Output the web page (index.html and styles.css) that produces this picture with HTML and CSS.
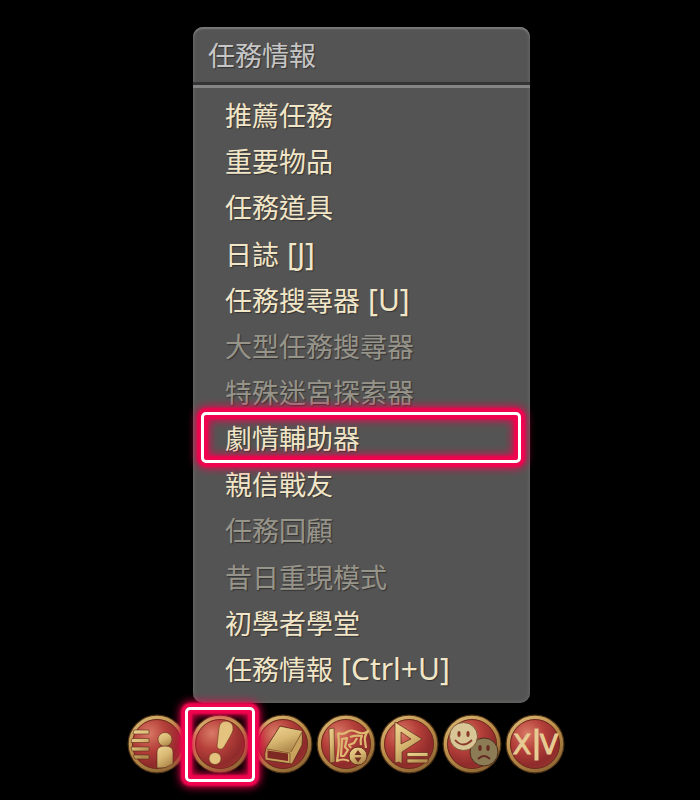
FILE: index.html
```html
<!DOCTYPE html>
<html lang="zh-Hant">
<head>
  <meta charset="UTF-8">
  <title>任務情報</title>
  <meta name="viewport" content="width=device-width, initial-scale=1.0">
  <link rel="stylesheet" href="styles.css">
</head>
<body>
  <!-- shared gradients for the round icons -->
  <svg class="defs" aria-hidden="true">
    <defs>
      <radialGradient id="red" cx="0.35" cy="0.3" r="0.8">
        <stop offset="0" stop-color="#d97a66"/>
        <stop offset="0.4" stop-color="#b5403a"/>
        <stop offset="0.75" stop-color="#8f2b2b"/>
        <stop offset="1" stop-color="#9c3a30"/>
      </radialGradient>
      <linearGradient id="ring" x1="0" y1="0" x2="0.6" y2="1">
        <stop offset="0" stop-color="#dcbb78"/>
        <stop offset="0.5" stop-color="#bd8f4a"/>
        <stop offset="1" stop-color="#946b36"/>
      </linearGradient>
      <linearGradient id="gold" x1="0" y1="0" x2="0.5" y2="1">
        <stop offset="0" stop-color="#f0d594"/>
        <stop offset="0.55" stop-color="#d8b873"/>
        <stop offset="1" stop-color="#b08a4d"/>
      </linearGradient>
      <g id="disc">
        <circle cx="30" cy="30" r="29.500" fill="#4b3116"/>
        <circle cx="30" cy="30" r="26.500" fill="url(#red)" stroke="url(#ring)" stroke-width="3.5"/>
        <circle cx="30" cy="30" r="24.500" fill="none" stroke="#6e2c1c" stroke-width="1"/>
      </g>
    </defs>
  </svg>

  <main class="hud">
    <section class="panel">
      <h1 class="panel-title">任務情報</h1>
      <ul class="menu">
        <li><button type="button">推薦任務</button></li>
        <li><button type="button">重要物品</button></li>
        <li><button type="button">任務道具</button></li>
        <li><button type="button">日誌 <span class="key">[J]</span></button></li>
        <li><button type="button">任務搜尋器 <span class="key">[U]</span></button></li>
        <li><button type="button" disabled>大型任務搜尋器</button></li>
        <li><button type="button" disabled>特殊迷宮探索器</button></li>
        <li><button type="button" class="marked">劇情輔助器</button></li>
        <li><button type="button">親信戰友</button></li>
        <li><button type="button" disabled>任務回顧</button></li>
        <li><button type="button" disabled>昔日重現模式</button></li>
        <li><button type="button">初學者學堂</button></li>
        <li><button type="button">任務情報 <span class="key">[Ctrl+U]</span></button></li>
      </ul>
    </section>

    <nav class="bar">
      <button type="button" aria-label="角色">
        <svg viewBox="0 0 60 60">
          <use href="#disc"/>
          <g fill="url(#gold)" stroke="#5b2a18" stroke-width="0.6">
            <path d="M7 16h15v4H6zM5 24.500h17v4H4zM4 33h18v4H5zM6 41h16v4H8z"/>
            <circle cx="38" cy="25.500" r="7"/>
            <path d="M30 54V38q0-6 8-6t8 6v12q-7 5-16 4z"/>
          </g>
        </svg>
      </button>
      <button type="button" class="marked" aria-label="任務">
        <svg viewBox="0 0 60 60">
          <use href="#disc"/>
          <g fill="#e3c37e" stroke="#6b3a1c" stroke-width="0.6">
            <path d="M27 32L29 14Q30 7 36 7Q44 8 43 16Q42 20 34 33Q32 36 29 35Q27 34 27 32z"/>
            <circle cx="25" cy="44.500" r="6"/>
          </g>
        </svg>
      </button>
      <button type="button" aria-label="日誌">
        <svg viewBox="0 0 60 60">
          <use href="#disc"/>
          <path d="M27 12L49 17Q50 24 49 31L39 50L12 46Q11 40 13 34z" fill="#c9a25e" stroke="#5b2a18" stroke-width="0.8"/>
          <path d="M27 13L49 17L38 38L14 34z" fill="url(#gold)"/>
          <path d="M14.500 36.500L35 39.500V47L14.500 44z" fill="#7d2a22"/>
          <path d="M38 38L49 18M14 35L37 39V49" fill="none" stroke="#8b6230" stroke-width="1"/>
        </svg>
      </button>
      <button type="button" aria-label="地圖">
        <svg viewBox="0 0 60 60">
          <use href="#disc"/>
          <path d="M13 15l5-1 1 34-5 1z" fill="url(#gold)" stroke="#5b2a18" stroke-width="0.6"/>
          <g fill="none" stroke="#deb971" stroke-width="2.2" stroke-linejoin="round">
            <path d="M22 19Q27 21 31 18T41 18T52 17Q48 22 49 27L50 34M22 19Q24 30 21 47Q27 44 33 47"/>
            <path d="M26 25L31 24 29 33 32 36 28 42H25z"/>
            <path d="M34 23Q40 21 46 22Q44 25 45 31M41 24L38 29 33 31 35 34"/>
          </g>
          <circle cx="42" cy="42" r="9" fill="url(#gold)" stroke="#69331d"/>
          <path d="M38.500 41l3.500-5 3.500 5zM38.500 43.500h7l-3.500 5z" fill="#713020"/>
        </svg>
      </button>
      <button type="button" aria-label="隊伍">
        <svg viewBox="0 0 60 60">
          <use href="#disc"/>
          <g fill="url(#gold)" stroke="#5b2a18" stroke-width="0.7">
            <path fill-rule="evenodd" d="M16 8L43 25L23 38V50L20 48L16 49zM22 18V30L32 25z"/>
            <path d="M28 38.500h21v4H28zM28 45h21v4H28z"/>
          </g>
        </svg>
      </button>
      <button type="button" aria-label="社交">
        <svg viewBox="0 0 60 60">
          <use href="#disc"/>
          <circle cx="42" cy="38" r="14" fill="#8b7c56" stroke="#4f2d1a"/>
          <g fill="#682b22">
            <ellipse cx="38" cy="34" rx="1.700" ry="3"/>
            <ellipse cx="46" cy="34" rx="1.700" ry="3"/>
          </g>
          <path d="M36 45Q42 39 48 45" fill="none" stroke="#682b22" stroke-width="2"/>
          <circle cx="21.500" cy="22.500" r="14" fill="#d8c697" stroke="#6a4427" stroke-width="0.8"/>
          <g fill="#8a3a29">
            <ellipse cx="17" cy="20" rx="1.600" ry="3"/>
            <ellipse cx="26" cy="20" rx="1.600" ry="3"/>
          </g>
          <path d="M13 26Q21 35 30 26" fill="none" stroke="#8a3a29" stroke-width="1.800"/>
        </svg>
      </button>
      <button type="button" aria-label="系統">
        <svg viewBox="0 0 60 60">
          <use href="#disc"/>
          <g class="xiv">
            <text x="17" y="40">X</text>
            <text x="44" y="40">V</text>
            <rect x="30" y="15" width="3" height="31"/>
          </g>
        </svg>
      </button>
    </nav>
  </main>
</body>
</html>
```
FILE: styles.css
```css
* {
  box-sizing: border-box;
}

body {
  margin: 0;
  background: #000;
  font-family: "Noto Sans CJK TC", sans-serif;
  font-size: 27px;
}

button {
  border: none;
  background: none;
  padding: 0;
  font: inherit;
  color: inherit;
  cursor: pointer;
}

.defs {
  position: absolute;
  width: 0;
  height: 0;
}

.hud {
  display: flex;
  flex-direction: column;
  align-items: center;
  padding: 27px 8px 24px 0;
}

.panel {
  width: 337px;
  margin-left: 31px;
  background: #555454;
  border-radius: 10px;
  box-shadow: inset 0 2px 1px #777, inset 0 0 4px #6c706c;
}

.panel-title {
  margin: 0;
  padding: 0 15px;
  font-size: 27px;
  font-weight: 400;
  line-height: 55px;
  color: #c6c6c6;
  text-shadow: 1px 1px 1px #333;
  border-bottom: 3px solid #353535;
}

.menu {
  display: grid;
  grid-auto-rows: 1fr;
  min-height: 618px;
  margin: 0;
  padding: 4px 9px 11px 8px;
  list-style: none;
  border-top: 3px solid #858585;
}

.menu li {
  display: grid;
}

.menu button {
  padding: 0 24px;
  text-align: left;
  line-height: 44px;
  white-space: nowrap;
  color: #f2e6c8;
  text-shadow: 1px 1px 1px #333;
}

.menu button:disabled {
  color: #97948a;
  cursor: default;
}

.key {
  margin-left: 2px;
  font-family: "Noto Sans", sans-serif;
  font-size: 30px;
  line-height: 30px;
}

.bar {
  display: flex;
  gap: 3px;
  margin-top: 11px;
}

.bar button {
  width: 60px;
  height: 60px;
}

.bar svg {
  display: block;
  width: 100%;
}

.xiv {
  font-family: "DejaVu Sans", sans-serif;
  font-size: 27px;
  text-anchor: middle;
  fill: #e6cc92;
  stroke: #e6cc92;
  stroke-width: 1px;
}

/* pink marker frame */
.marked {
  position: relative;
}

.marked::after {
  content: "";
  position: absolute;
  inset: -3px 0 -2px;
  border: 3px solid #fff;
  border-radius: 5px;
  box-shadow: 0 0 2px 4px #f0044f, 0 0 8px 5px #f0044f,
    inset 0 0 2px 4px #f0044f, inset 0 0 8px 5px #f0044f;
  pointer-events: none;
}

.bar .marked::after {
  inset: -7px -5px -8px;
}
```
